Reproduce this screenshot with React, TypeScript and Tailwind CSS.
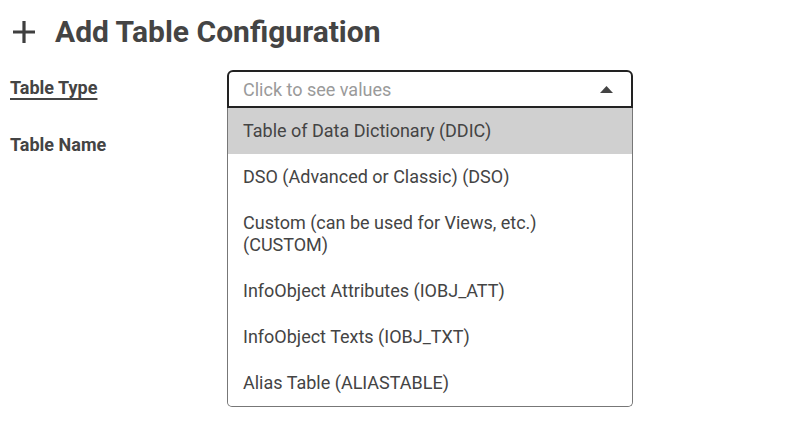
import { useState } from "react";

const tableTypes = [
  "Table of Data Dictionary (DDIC)",
  "DSO (Advanced or Classic) (DSO)",
  "Custom (can be used for Views, etc.) (CUSTOM)",
  "InfoObject Attributes (IOBJ_ATT)",
  "InfoObject Texts (IOBJ_TXT)",
  "Alias Table (ALIASTABLE)",
];

function PlusIcon() {
  return (
    <svg width="24" height="24" viewBox="0 0 24 24" className="shrink-0">
      <path d="M12 1v22M1 12h22" stroke="#3f3f3f" strokeWidth="3.2" strokeLinecap="butt" />
    </svg>
  );
}

export default function App() {
  const [active] = useState(0);

  return (
    <div className="min-h-[435px] w-[807px] bg-white text-[#444] font-['Roboto',sans-serif]">
      <div className="flex items-center gap-[19px] pl-[12px] pt-[15px]">
        <PlusIcon />
        <h1 className="text-[30px] font-bold leading-[34px] text-[#444]">Add Table Configuration</h1>
      </div>

      <div className="mt-[21px] flex">
        <div className="w-[227px] pl-[10px] pt-[8px]">
          <div className="text-[18px] font-bold leading-[20px] underline underline-offset-[4px] decoration-[1.5px]">
            Table Type
          </div>
          <div className="mt-[37px] text-[18px] font-bold leading-[20px]">Table Name</div>
        </div>

        <div className="w-[406px]">
          <div className="flex h-[38px] items-center justify-between rounded-t-[6px] border-2 border-[#222] pl-[14px] pr-[18px]">
            <span className="text-[18px] text-[#9a9a9a]">Click to see values</span>
            <svg width="13" height="7" viewBox="0 0 13 7">
              <path d="M0 7L6.5 0L13 7Z" fill="#444" />
            </svg>
          </div>
          <ul className="rounded-b-[5px] border border-t-0 border-[#777]">
            {tableTypes.map((t, i) => (
              <li
                key={t}
                className={`px-[15px] py-[12px] text-[18px] leading-[22px] ${
                  i === active ? "bg-[#d0d0d0]" : "bg-white"
                } ${i === tableTypes.length - 1 ? "rounded-b-[5px]" : ""}`}
              >
                <span className="block max-w-[320px]">{t}</span>
              </li>
            ))}
          </ul>
        </div>
      </div>
    </div>
  );
}
